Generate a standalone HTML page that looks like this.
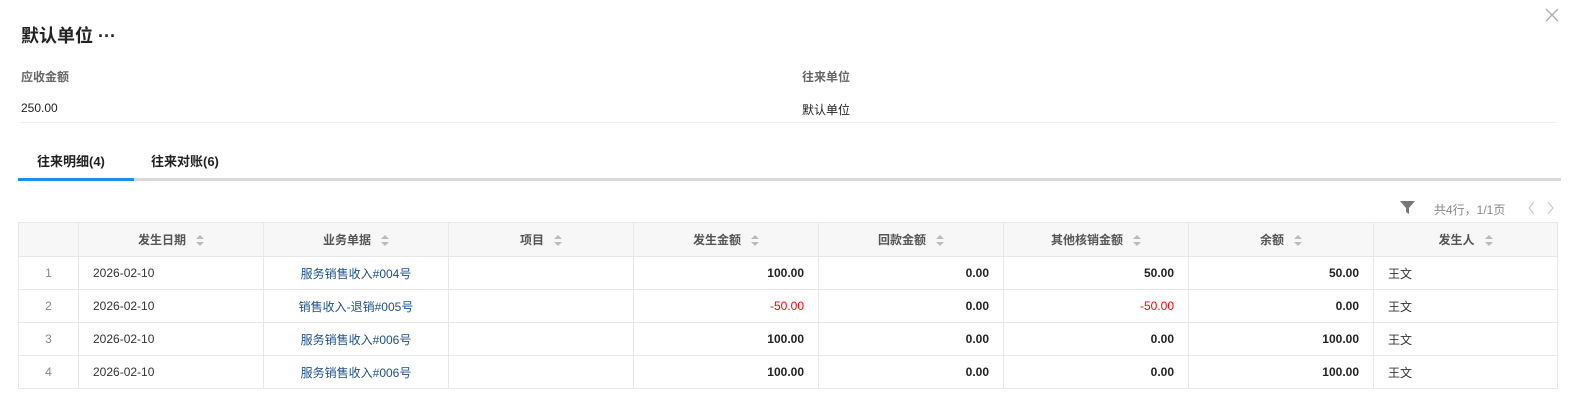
<!DOCTYPE html>
<html><head><meta charset="utf-8"><style>
*{margin:0;padding:0;box-sizing:border-box}
body{width:1593px;height:420px;background:#fff;font-family:"Liberation Sans","Noto Sans CJK SC",sans-serif;font-size:12px;color:#333;position:relative;overflow:hidden}
.a{position:absolute;white-space:nowrap}
table{position:absolute;left:18px;top:222px;border-collapse:collapse;table-layout:fixed}
td,th{border:1px solid #e8e8e8;height:33px;padding:0 14px;font-size:12px}
th{background:#f7f7f7;color:#555;font-weight:bold;text-align:center;height:34px}
.s{display:inline-block;vertical-align:middle;margin-left:10px;width:8px;height:11px;position:relative}
.s:before,.s:after{content:"";position:absolute;left:0;border-left:4px solid transparent;border-right:4px solid transparent}
.s:before{top:0;border-bottom:4px solid #bbb}.s:after{bottom:0;border-top:4px solid #bbb}
.r{text-align:right;font-weight:bold;color:#222}
.red{color:#f00;font-weight:normal}
.l{text-align:center;color:#1d4f8c}
.n{text-align:center;color:#888}
</style></head><body>
<div class="a" style="left:21px;top:22px;font-size:18px;font-weight:bold;color:#222">默认单位 ···</div>
<svg class="a" style="left:1545px;top:8px" width="14" height="14"><path d="M1 1L13 13M13 1L1 13" stroke="#aaa" stroke-width="1.3"/></svg>
<div class="a" style="left:21px;top:68px;color:#666;font-weight:bold">应收金额</div>
<div class="a" style="left:802px;top:68px;color:#666;font-weight:bold">往来单位</div>
<div class="a" style="left:21px;top:101px;color:#222">250.00</div>
<div class="a" style="left:802px;top:101px;color:#222">默认单位</div>
<div class="a" style="left:20px;top:122px;width:1537px;height:1px;background:#eee"></div>
<div class="a" style="left:37px;top:151px;font-size:13px;font-weight:bold;color:#222">往来明细(4)</div>
<div class="a" style="left:151px;top:151px;font-size:13px;font-weight:bold;color:#222">往来对账(6)</div>
<div class="a" style="left:18px;top:178px;width:1543px;height:3px;background:#d9d9d9"></div>
<div class="a" style="left:18px;top:178px;width:116px;height:3px;background:#1e8fe8"></div>
<svg class="a" style="left:1400px;top:200px" width="15" height="15"><path d="M0 1H15L9 8V14L6 12V8Z" fill="#777"/></svg>
<div class="a" style="left:1434px;top:201px;color:#888">共4行，1/1页</div>
<svg class="a" style="left:1528px;top:201px" width="26" height="14"><path d="M6 1L1 7L6 13M20 1L25 7L20 13" stroke="#ccc" fill="none" stroke-width="1.2"/></svg>
<table>
<colgroup><col width="60"><col width="185"><col width="185"><col width="185"><col width="185"><col width="185"><col width="185"><col width="185"><col width="184"></colgroup>
<tr><th></th><th>发生日期<span class="s"></span></th><th>业务单据<span class="s"></span></th><th>项目<span class="s"></span></th><th>发生金额<span class="s"></span></th><th>回款金额<span class="s"></span></th><th>其他核销金额<span class="s"></span></th><th>余额<span class="s"></span></th><th>发生人<span class="s"></span></th></tr>
<tr><td class="n">1</td><td>2026-02-10</td><td class="l">服务销售收入#004号</td><td></td><td class="r">100.00</td><td class="r">0.00</td><td class="r">50.00</td><td class="r">50.00</td><td>王文</td></tr>
<tr><td class="n">2</td><td>2026-02-10</td><td class="l">销售收入-退销#005号</td><td></td><td class="r red">-50.00</td><td class="r">0.00</td><td class="r red">-50.00</td><td class="r">0.00</td><td>王文</td></tr>
<tr><td class="n">3</td><td>2026-02-10</td><td class="l">服务销售收入#006号</td><td></td><td class="r">100.00</td><td class="r">0.00</td><td class="r">0.00</td><td class="r">100.00</td><td>王文</td></tr>
<tr><td class="n">4</td><td>2026-02-10</td><td class="l">服务销售收入#006号</td><td></td><td class="r">100.00</td><td class="r">0.00</td><td class="r">0.00</td><td class="r">100.00</td><td>王文</td></tr>
</table>
</body></html>
